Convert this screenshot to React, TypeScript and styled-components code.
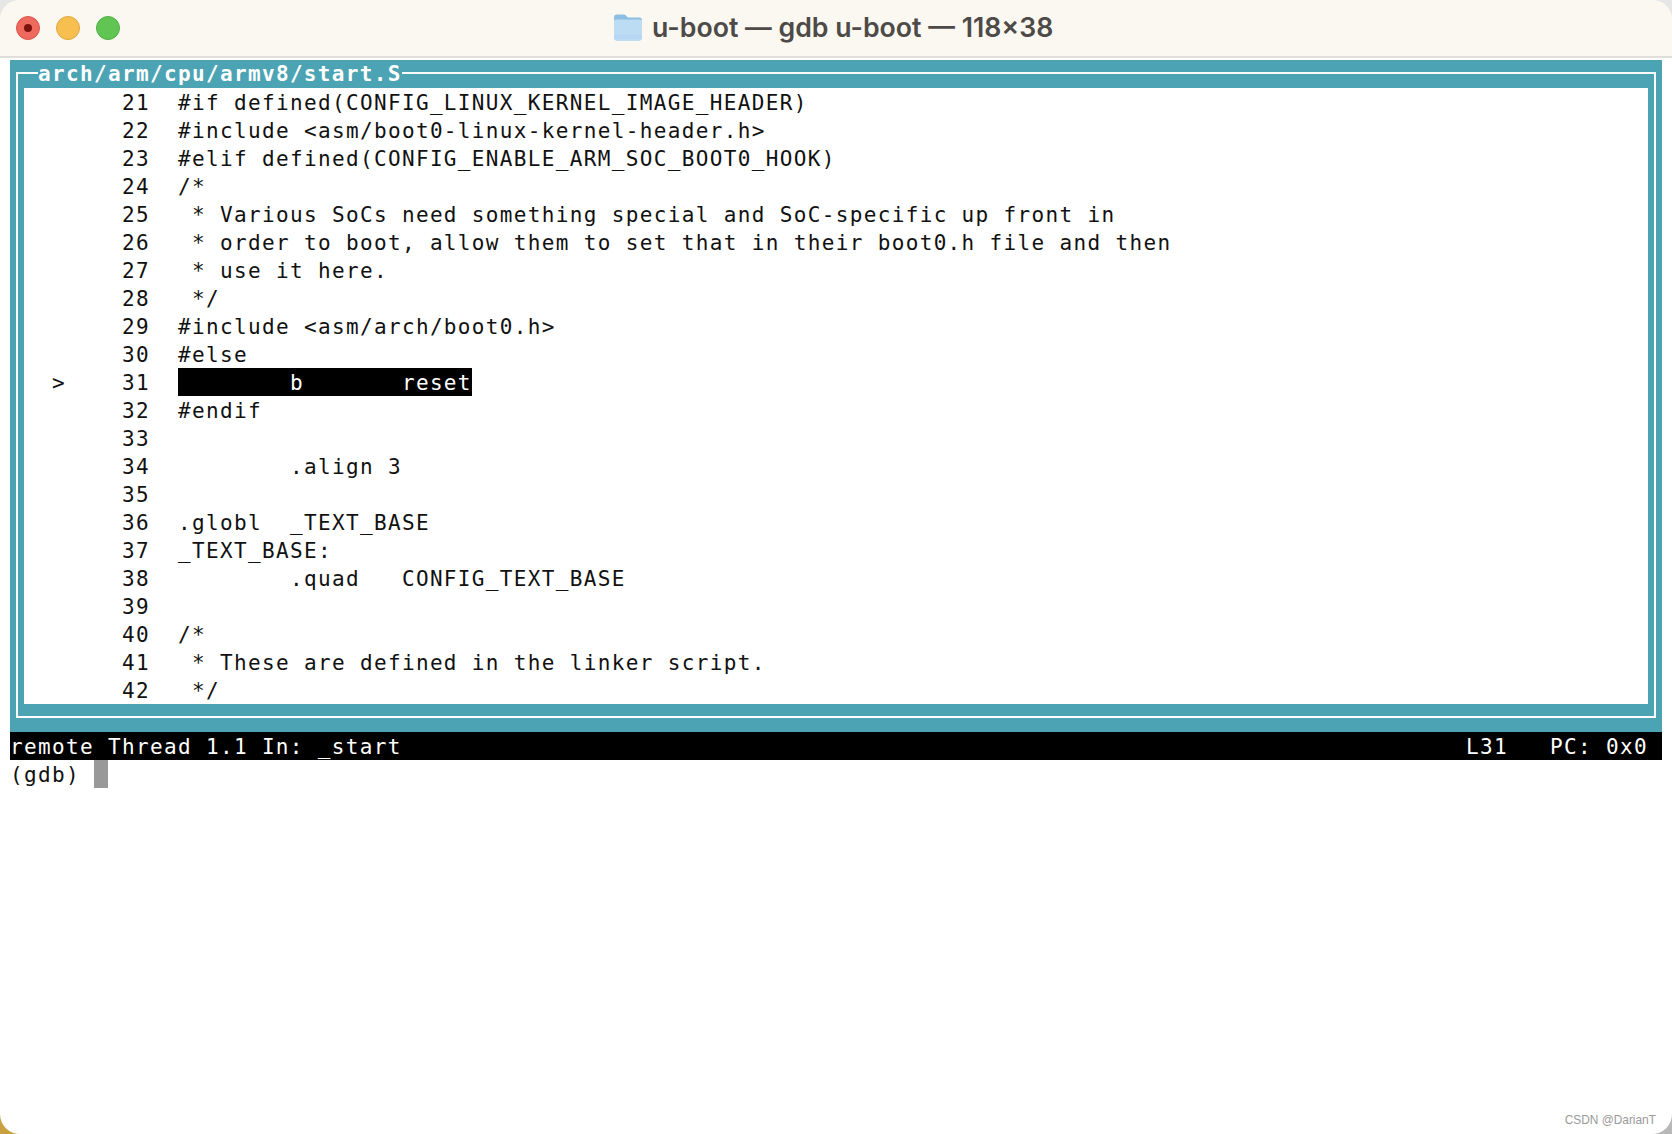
import React from 'react';
import styled, { createGlobalStyle } from 'styled-components';

const GlobalStyle = createGlobalStyle`
html, body {
    margin: 0;
    padding: 0;
    background: #fff;
}
`;

const Desktop = styled.div`
width: 1672px;
height: 1134px;
overflow: hidden;
background:
    linear-gradient(to right, #c9a23f 0, #c9a23f 40px, transparent 40px) left bottom / 100% 40px no-repeat,
    linear-gradient(to right, #e6e6e6 0, #e6e6e6 100%) left top / 100% 40px no-repeat,
    #b8b8b8;
`;

const Window = styled.div`
position: relative;
width: 100%;
height: 100%;
background: #fff;
border-radius: 20px;
overflow: hidden;
`;

const TitleBar = styled.div`
display: flex;
align-items: center;
box-sizing: border-box;
height: 58px;
padding: 0 0 0 16px;
background: #fbf8f1;
border-bottom: 2px solid #dfdedb;
`;

const Lights = styled.div`
display: flex;
gap: 16px;
`;

const Light = styled.span<{ $bg: string; $edge: string }>`
display: flex;
align-items: center;
justify-content: center;
box-sizing: border-box;
width: 24px;
height: 24px;
border-radius: 50%;
background: ${p => p.$bg};
border: 1px solid ${p => p.$edge};
`;

const LightDot = styled.span`
width: 8px;
height: 8px;
border-radius: 50%;
background: #7b130c;
`;

const TitleCenter = styled.div`
display: flex;
align-items: center;
gap: 9px;
margin: -2px 0 0 493px;
`;

const WindowTitle = styled.span`
font-family: Inter, "Liberation Sans", sans-serif;
font-size: 26.7px;
font-weight: 600;
color: #4d4a48;
white-space: nowrap;
`;

const Terminal = styled.div`
margin: 2px 10px 0;
font-family: "DejaVu Sans Mono", monospace;
font-size: 21px;
letter-spacing: 1.35px;
line-height: 30px;
color: #111;
`;

const SourcePanel = styled.div`
box-sizing: border-box;
height: 672px;
padding: 12px 6px 14px;
background: #4ba3b3;
`;

const Frame = styled.div`
position: relative;
box-sizing: border-box;
height: 100%;
padding: 14px 6px 12px;
border: 2px solid #fff;
`;

const FileName = styled.span`
position: absolute;
top: -14px;
left: 20px;
height: 28px;
line-height: 28px;
background: #4ba3b3;
color: #fff;
font-weight: 700;
white-space: pre;
`;

const SourceBody = styled.div`
background: #fff;
height: 616px;
overflow: hidden;
`;

const SourceRow = styled.div`
display: grid;
grid-template-columns: 70px 56px 1fr;
grid-template-rows: 28px;
height: 28px;
padding-left: 28px;
`;

const Marker = styled.span`
white-space: pre;
`;

const LineNo = styled.span`
white-space: pre;
`;

const Code = styled.span<{ $active?: boolean }>`
justify-self: start;
white-space: pre;
background: ${p => (p.$active ? '#000' : 'transparent')};
color: ${p => (p.$active ? '#fff' : 'inherit')};
`;

const StatusBar = styled.div`
display: flex;
justify-content: space-between;
height: 28px;
padding-right: 14px;
background: #000;
color: #fff;
white-space: pre;
`;

const Prompt = styled.div`
display: flex;
height: 28px;
white-space: pre;
`;

const Cursor = styled.span`
width: 14px;
height: 28px;
background: #989898;
`;

const Watermark = styled.span`
position: absolute;
right: 16px;
bottom: 7px;
font-family: "Liberation Sans", sans-serif;
font-size: 11.9px;
color: #9a9a9a;
`;

const sourceLines: [number, string][] = [
    [21, '#if defined(CONFIG_LINUX_KERNEL_IMAGE_HEADER)'],
    [22, '#include <asm/boot0-linux-kernel-header.h>'],
    [23, '#elif defined(CONFIG_ENABLE_ARM_SOC_BOOT0_HOOK)'],
    [24, '/*'],
    [25, ' * Various SoCs need something special and SoC-specific up front in'],
    [26, ' * order to boot, allow them to set that in their boot0.h file and then'],
    [27, ' * use it here.'],
    [28, ' */'],
    [29, '#include <asm/arch/boot0.h>'],
    [30, '#else'],
    [31, '        b       reset'],
    [32, '#endif'],
    [33, ''],
    [34, '        .align 3'],
    [35, ''],
    [36, '.globl  _TEXT_BASE'],
    [37, '_TEXT_BASE:'],
    [38, '        .quad   CONFIG_TEXT_BASE'],
    [39, ''],
    [40, '/*'],
    [41, ' * These are defined in the linker script.'],
    [42, ' */'],
];

const FolderIcon = () => (
    <svg width="30" height="28" viewBox="0 0 30 28">
        <path d="M1 4.500C1 2.500 2 1.500 4 1.500h6.500c1.200 0 1.800.4 2.600 1.200L15 4.500h11c2 0 3 1 3 3v17c0 2-1 3-3 3H4c-2 0-3-1-3-3z" fill="#8dbfe3" />
        <path d="M1 8.500c0-1.200.8-2 2-2h24c1.200 0 2 .8 2 2v16c0 2-1 3-3 3H4c-2 0-3-1-3-3z" fill="#bcdcf4" />
        <path d="M1 23h28M1 25h28" stroke="#a9cfec" strokeWidth="0.6" fill="none" />
    </svg>
);

const App: React.FC = () => {
    return (
        <Desktop>
            <GlobalStyle />
            <Window>
                <TitleBar>
                    <Lights>
                        <Light $bg="#ee6a5f" $edge="#d9574d"><LightDot /></Light>
                        <Light $bg="#f6bf50" $edge="#dfa63c" />
                        <Light $bg="#61c554" $edge="#52ad46" />
                    </Lights>
                    <TitleCenter>
                        <FolderIcon />
                        <WindowTitle>u-boot — gdb u-boot — 118×38</WindowTitle>
                    </TitleCenter>
                </TitleBar>
                <Terminal>
                    <SourcePanel>
                        <Frame>
                            <FileName>arch/arm/cpu/armv8/start.S</FileName>
                            <SourceBody>
                                {sourceLines.map(([no, text]) => (
                                    <SourceRow key={no}>
                                        <Marker>{no === 31 ? '>' : ''}</Marker>
                                        <LineNo>{no}</LineNo>
                                        <Code $active={no === 31}>{text}</Code>
                                    </SourceRow>
                                ))}
                            </SourceBody>
                        </Frame>
                    </SourcePanel>
                    <StatusBar>
                        <span>remote Thread 1.1 In: _start</span>
                        <span>L31   PC: 0x0</span>
                    </StatusBar>
                    <Prompt>
                        <span>(gdb) </span>
                        <Cursor />
                    </Prompt>
                </Terminal>
                <Watermark>CSDN @DarianT</Watermark>
            </Window>
        </Desktop>
    );
};

export default App;
